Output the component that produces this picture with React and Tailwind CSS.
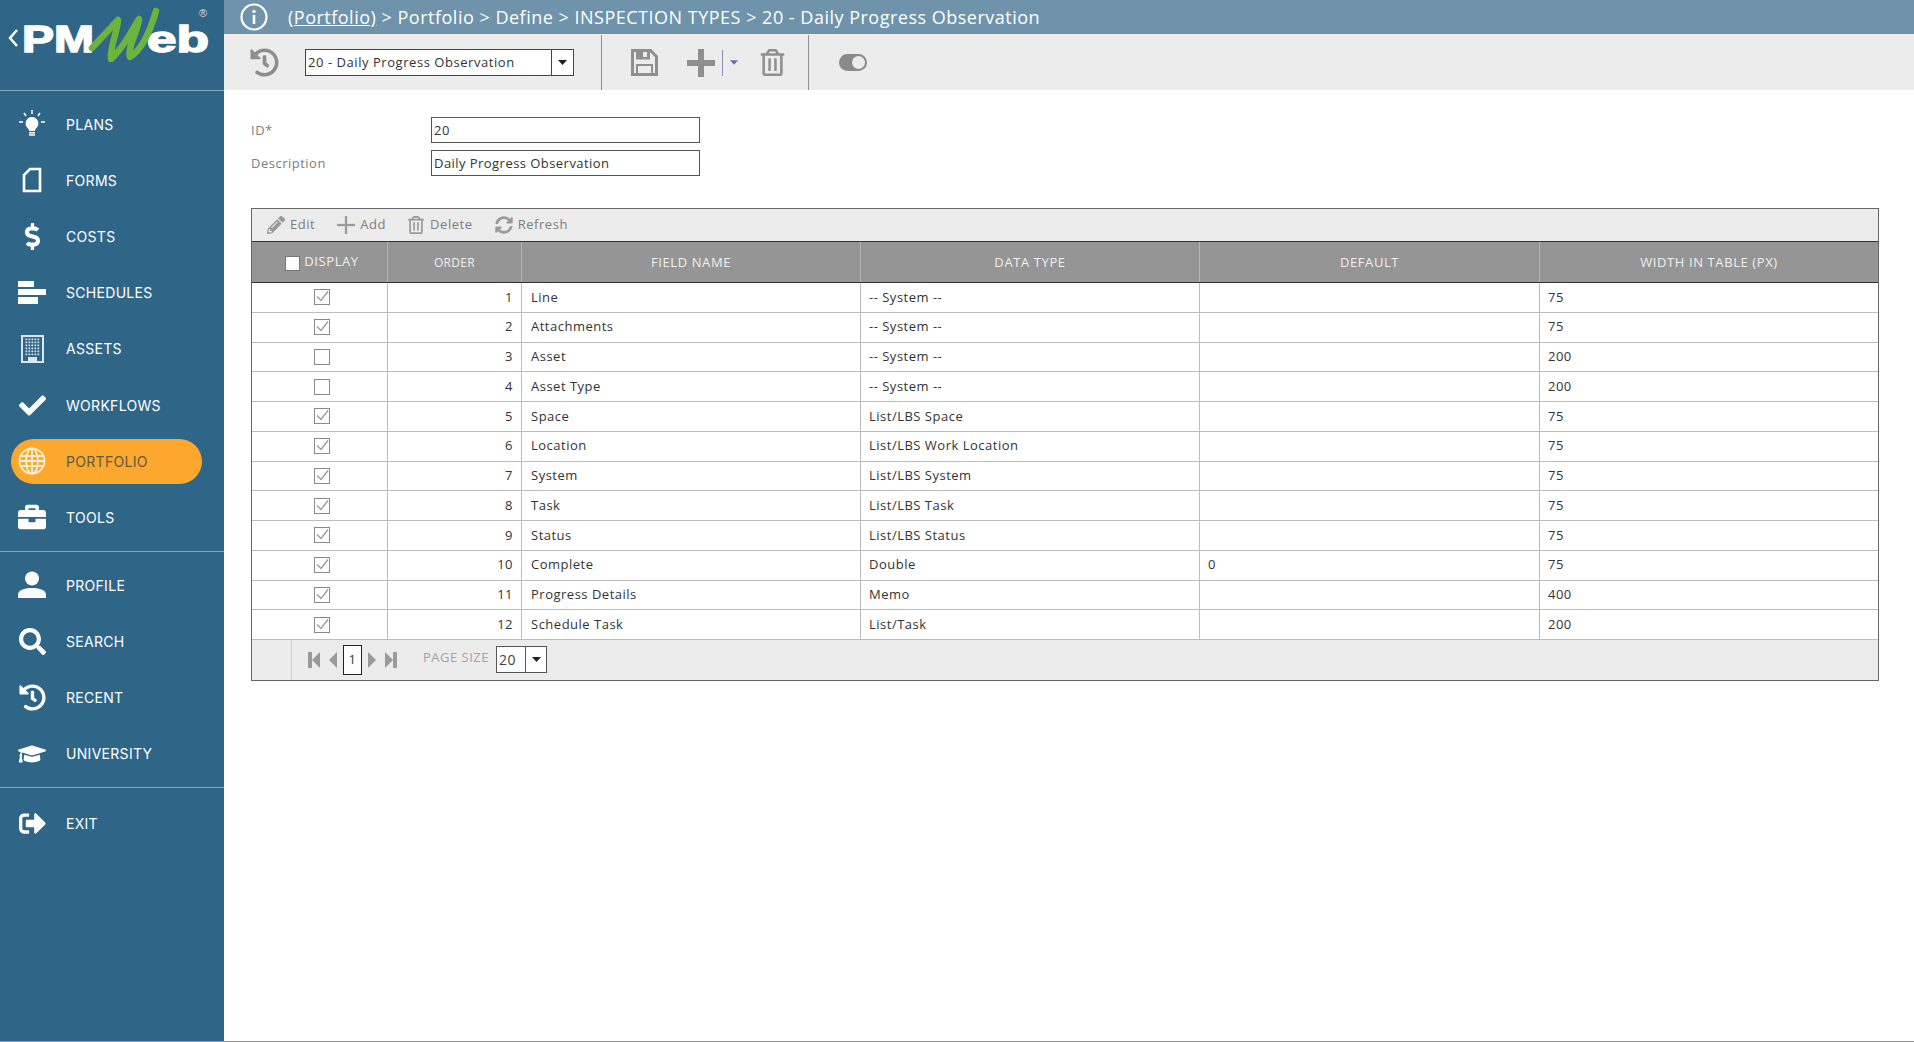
import React from 'react';
import { FaHistory, FaDollarSign, FaCheck, FaBriefcase, FaSearch, FaGraduationCap, FaRegTrashAlt, FaPencilAlt, FaSyncAlt, FaSignOutAlt } from 'react-icons/fa';

const Logo = () => (
  <svg width="224" height="74" viewBox="0 0 224 74" className="block">
    <path d="M17 30l-7 8 7 8" fill="none" stroke="#fff" strokeWidth="2.500" />
    <text x="22" y="52" fontFamily="Liberation Sans, sans-serif" fontWeight="700" fontSize="36" fill="#fff" stroke="#fff" strokeWidth="1.500" textLength="72" lengthAdjust="spacingAndGlyphs">PM</text>
    <text x="147" y="52" fontFamily="Liberation Sans, sans-serif" fontWeight="700" fontSize="36" fill="#fff" stroke="#fff" strokeWidth="1.500" textLength="62" lengthAdjust="spacingAndGlyphs">eb</text>
    <path d="M92 48L118 20C117 34 110 46 111 59C122 50 131 32 139 19C138 32 127 47 130 57C142 50 151 28 156 11" fill="none" stroke="#6cb33f" strokeWidth="6.500" strokeLinejoin="round" strokeLinecap="round" />
    <text x="199" y="17" fontFamily="Liberation Sans, sans-serif" fontSize="11" fill="#cfdde6">®</text>
  </svg>
);

const Bulb = () => (
  <svg width="26" height="28" viewBox="0 0 26 28" fill="#fff">
    <path d="M13 7a6.500 6.500 0 0 0-4 11.500c.8.8 1.200 1.600 1.200 2.500h5.600c0-.9.4-1.700 1.200-2.500A6.500 6.500 0 0 0 13 7z" />
    <rect x="10" y="22" width="6" height="1.500" />
    <rect x="10" y="24.200" width="6" height="1.500" />
    <g stroke="#fff" strokeWidth="1.500">
      <path d="M13 0v4M5 3l2 3M21 3l-2 3M0 12h4M22 12h4" />
    </g>
  </svg>
);
const FormIcon = () => (
  <svg width="20" height="26" viewBox="0 0 20 26"><path d="M8 2h10v22H2V8z" fill="none" stroke="#fff" strokeWidth="2.600" /></svg>
);
const Schedules = () => (
  <svg width="28" height="24" viewBox="0 0 28 24" fill="#fff"><rect x="0" y="0" width="16" height="6" /><rect x="0" y="8" width="28" height="6" /><rect x="0" y="16" width="20" height="7" /></svg>
);
const Building = () => {
  const dots = [];
  for (let r = 0; r < 6; r++) for (let c = 0; c < 5; c++) dots.push(<rect key={`${r}-${c}`} x={4.500 + c * 3} y={3.500 + r * 3} width="1.700" height="1.700" />);
  return (
    <svg width="23" height="28" viewBox="0 0 23 28" fill="#dbe6ee">
      <path fillRule="evenodd" d="M0 0h23v28H0zM2 2v24h5v-4h9v4h5V2z" />
      {dots}
    </svg>
  );
};
const Globe = () => (
  <svg width="28" height="28" viewBox="0 0 28 28" fill="none" stroke="#fdeed6" strokeWidth="1.800">
    <circle cx="14" cy="14" r="12.500" />
    <ellipse cx="14" cy="14" rx="6" ry="12.500" />
    <path d="M14 1.500v25M2 9h24M2 19h24M1.500 14h25" />
  </svg>
);
const User = () => (
  <svg width="28" height="28" viewBox="0 0 28 28" fill="#fff">
    <circle cx="14" cy="7.500" r="7" />
    <path d="M0 27v-3c0-5 6-7 14-7s14 2 14 7v3z" />
  </svg>
);

const items1 = [
  ['PLANS', <Bulb />], ['FORMS', <FormIcon />], ['COSTS', <FaDollarSign size={27} />], ['SCHEDULES', <Schedules />],
  ['ASSETS', <Building />], ['WORKFLOWS', <FaCheck size={27} />], ['PORTFOLIO', <Globe />], ['TOOLS', <FaBriefcase size={28} />],
];
const items2 = [
  ['PROFILE', <User />], ['SEARCH', <FaSearch size={27} />], ['RECENT', <FaHistory size={27} />], ['UNIVERSITY', <FaGraduationCap size={28} />],
];
const items3 = [['EXIT', <FaSignOutAlt size={27} />]];

const NavItem = ({ label, icon }) => {
  const active = label === 'PORTFOLIO';
  return (
    <div className="h-[56.200px] flex items-center">
      <div className={active ? 'flex items-center h-[45px] w-[191px] ml-[11px] rounded-[23px] bg-[#fca82e]' : 'flex items-center h-[45px] w-[191px] ml-[11px]'}>
        <div className={active ? 'w-[42px] flex justify-center text-[#fdeed6]' : 'w-[42px] flex justify-center text-white'}>{icon}</div>
        <span className={active ? 'ml-[13px] text-[14px] tracking-[0.3px] text-[#5c5a45]' : 'ml-[13px] text-[14px] tracking-[0.3px] text-white'}>{label}</span>
      </div>
    </div>
  );
};

const Sidebar = () => (
  <aside className="w-[224px] shrink-0 h-[1041px] bg-[#2f6688] font-['Inter',sans-serif]">
    <div className="h-[91px] border-b border-[#7fa6bf]"><Logo /></div>
    <div className="h-[461px] pt-[5px] border-b border-[#7fa6bf]">{items1.map(([l, i]) => <NavItem key={l} label={l} icon={i} />)}</div>
    <div className="h-[236px] pt-[5px] border-b border-[#7fa6bf]">{items2.map(([l, i]) => <NavItem key={l} label={l} icon={i} />)}</div>
    <div className="pt-[7px]">{items3.map(([l, i]) => <NavItem key={l} label={l} icon={i} />)}</div>
  </aside>
);

const Caret = ({ className = '' }) => (
  <svg width="9" height="5" viewBox="0 0 9 5" className={className}><path d="M0 0h9L4.500 5z" fill="currentColor" /></svg>
);

const TopBar = () => (
  <div className="h-[34px] bg-[#6e93ab] flex items-center pl-[16px] text-white text-[18px] tracking-[0.5px]">
    <svg width="28" height="28" viewBox="0 0 28 28">
      <circle cx="14" cy="14" r="12.500" fill="none" stroke="#fff" strokeWidth="2.200" />
      <circle cx="14" cy="8.500" r="1.700" fill="#fff" />
      <rect x="12.700" y="12" width="2.600" height="9" fill="#fff" />
    </svg>
    <span className="ml-[20px] whitespace-pre"><span className="underline">(Portfolio)</span> {'>'} Portfolio {'>'} Define {'>'} INSPECTION TYPES {'>'} 20 - Daily Progress Observation</span>
  </div>
);

const SaveIcon = () => (
  <svg width="27" height="27" viewBox="0 0 27 27" className="ml-[29px]">
    <path d="M1.500 1.500h18l6 6v18h-24z" fill="none" stroke="currentColor" strokeWidth="3" />
    <rect x="5" y="1.500" width="14" height="9" fill="currentColor" />
    <rect x="12" y="3" width="4" height="5" fill="#ececec" />
    <rect x="6" y="16" width="15" height="9" fill="none" stroke="currentColor" strokeWidth="2" />
  </svg>
);
const PlusIcon = ({ size, bar, className }) => (
  <svg width={size} height={size} viewBox="0 0 28 28" className={className} fill="currentColor">
    <rect x={14 - bar / 2} y="0" width={bar} height="28" />
    <rect x="0" y={14 - bar / 2} width="28" height={bar} />
  </svg>
);

const Toolbar = () => (
  <div className="h-[56px] bg-[#ececec] border-t border-[#f3ebe6] flex items-center text-[#8f8f8f]">
    <div className="w-[378px] h-full flex items-center border-r border-[#8f8f8f]">
      <FaHistory size={29} className="ml-[26px] text-[#8e8e8e]" />
      <div className="ml-[26px] w-[269px] h-[27px] border border-[#444] bg-white flex items-center text-[13px] text-[#333] tracking-[0.55px]">
        <span className="flex-1 pl-[2px] pt-px">20 - Daily Progress Observation</span>
        <span className="w-[22px] h-full border-l border-[#444] flex items-center justify-center text-[#222]"><Caret /></span>
      </div>
    </div>
    <div className="w-[207px] h-full flex items-center border-r border-[#8f8f8f]">
      <SaveIcon />
      <PlusIcon size={28} bar={6} className="ml-[29px]" />
      <span className="ml-[7px] w-px h-[26px] bg-[#8d8db5]" />
      <Caret className="ml-[7px] text-[#6c6ca8] w-[8px]" />
      <FaRegTrashAlt size={27} className="ml-[21px]" />
    </div>
    <div className="ml-[30px] w-[28px] h-[17px] rounded-full bg-[#8a8a8a] flex items-center justify-end pr-[2px]">
      <span className="w-[13px] h-[13px] rounded-full bg-[#ececec]" />
    </div>
  </div>
);

const Field = ({ label, value }) => (
  <div className="flex items-center h-[26px]">
    <span className="w-[180px] pt-[2px] text-[#7d7d7d] text-[13px] tracking-[0.5px]">{label}</span>
    <div className="w-[269px] h-[26px] border border-[#555] bg-white flex items-center pl-[2px] pt-[2px] text-[13px] text-[#333] tracking-[0.45px]">{value}</div>
  </div>
);

const sel = 'grid grid-cols-[136px_134px_339px_339px_340px_1fr]';
const rows = [
  [1, 1, 'Line', '-- System --', '', 75],
  [1, 2, 'Attachments', '-- System --', '', 75],
  [0, 3, 'Asset', '-- System --', '', 200],
  [0, 4, 'Asset Type', '-- System --', '', 200],
  [1, 5, 'Space', 'List/LBS Space', '', 75],
  [1, 6, 'Location', 'List/LBS Work Location', '', 75],
  [1, 7, 'System', 'List/LBS System', '', 75],
  [1, 8, 'Task', 'List/LBS Task', '', 75],
  [1, 9, 'Status', 'List/LBS Status', '', 75],
  [1, 10, 'Complete', 'Double', '0', 75],
  [1, 11, 'Progress Details', 'Memo', '', 400],
  [1, 12, 'Schedule Task', 'List/Task', '', 200],
];

const Check = ({ on }) => (
  <svg width="16" height="16" viewBox="0 0 16 16">
    <rect x="0.500" y="0.500" width="15" height="15" fill="#fff" stroke="#8a8a8a" />
    {on ? <path d="M3 7.500l4 4 7-9" fill="none" stroke="#9a9a9a" strokeWidth="1.300" /> : null}
  </svg>
);

const Tool = ({ icon, label, className }) => (
  <div className={`flex items-center gap-[5px] ${className}`}>{icon}<span className="text-[13px] tracking-[0.55px] text-[#7d7d7d]">{label}</span></div>
);

const Table = () => (
  <div className="mt-[32px] mr-[35px] border border-[#666] text-[13px] tracking-[0.5px] text-[#333]">
    <div className="h-[33px] bg-[#ececec] border-b border-[#333] flex items-center text-[#9a9a9a]">
      <Tool className="ml-[15px]" icon={<FaPencilAlt size={18} />} label="Edit" />
      <Tool className="ml-[22px]" icon={<PlusIcon size={18} bar={3.500} />} label="Add" />
      <Tool className="ml-[21px]" icon={<FaRegTrashAlt size={18} />} label="Delete" />
      <Tool className="ml-[22px]" icon={<FaSyncAlt size={18} />} label="Refresh" />
    </div>
    <div className={`${sel} h-[41px] bg-[#959595] border-b border-[#333] text-[13px] tracking-[0.6px] text-[#f0f0f0]`}>
      <div className="border-r border-[#b5b5b5] flex items-center justify-center gap-[4px] pl-[5px]">
        <span className="w-[15px] h-[15px] bg-white border border-[#777] mt-[3px]" />DISPLAY
      </div>
      <div className="border-r border-[#b5b5b5] flex items-center justify-center pt-[2px] text-[12px] tracking-[0.3px]">ORDER</div>
      {['FIELD NAME', 'DATA TYPE', 'DEFAULT', 'WIDTH IN TABLE (PX)'].map((h, i) => (
        <div key={h} className={i < 3 ? 'border-r border-[#b5b5b5] flex items-center justify-center pt-[2px]' : 'flex items-center justify-center pt-[2px]'}>{h}</div>
      ))}
    </div>
    {rows.map(([on, n, f, t, d, w]) => (
      <div key={n} className={`${sel} h-[29.750px] bg-white border-b border-[#bdbdbd]`}>
        <div className="border-r border-[#bdbdbd] flex items-center justify-center pl-[5px]"><Check on={on} /></div>
        <div className="border-r border-[#bdbdbd] flex items-center justify-end pr-[8px]">{n}</div>
        <div className="border-r border-[#bdbdbd] flex items-center pl-[9px]">{f}</div>
        <div className="border-r border-[#bdbdbd] flex items-center pl-[8px]">{t}</div>
        <div className="border-r border-[#bdbdbd] flex items-center pl-[8px]">{d}</div>
        <div className="flex items-center pl-[8px]">{w}</div>
      </div>
    ))}
    <div className="h-[40px] bg-[#ececec] flex items-center">
      <div className="w-[40px] h-full border-r border-[#cfcfcf]" />
      <svg width="29" height="18" viewBox="0 0 29 18" className="ml-[16px] text-[#9a9a9a]" fill="currentColor">
        <rect x="0" y="1" width="4" height="16" /><path d="M12 1v16L4 9z" /><path d="M29 1v16L21 9z" />
      </svg>
      <div className="ml-[6px] w-[19px] h-[30px] border border-[#222] bg-white flex items-center justify-center text-[#333]">1</div>
      <svg width="30" height="18" viewBox="0 0 30 18" className="ml-[6px] text-[#9a9a9a]" fill="currentColor">
        <path d="M0 1v16l8-8z" /><path d="M17 1v16l8-8z" /><rect x="25" y="1" width="4" height="16" />
      </svg>
      <span className="ml-[25px] -mt-[5px] text-[#a3a3a3]">PAGE SIZE</span>
      <div className="ml-[7px] -mt-[1px] w-[51px] h-[27px] border border-[#555] bg-white flex items-center text-[#444]">
        <span className="flex-1 pl-[2px] text-[14px]">20</span>
        <span className="w-[21px] h-full border-l border-[#555] flex items-center justify-center text-[#222]"><Caret /></span>
      </div>
    </div>
  </div>
);

export default function App() {
  return (
    <div className="w-full h-[1042px] overflow-hidden bg-white border-b border-[#999] flex font-['Open_Sans',sans-serif]">
      <Sidebar />
      <main className="flex-1 min-w-0">
        <TopBar />
        <Toolbar />
        <div className="pl-[27px] pt-[27px]">
          <div className="flex flex-col gap-[7px]">
            <Field label="ID*" value="20" />
            <Field label="Description" value="Daily Progress Observation" />
          </div>
          <Table />
        </div>
      </main>
    </div>
  );
}
